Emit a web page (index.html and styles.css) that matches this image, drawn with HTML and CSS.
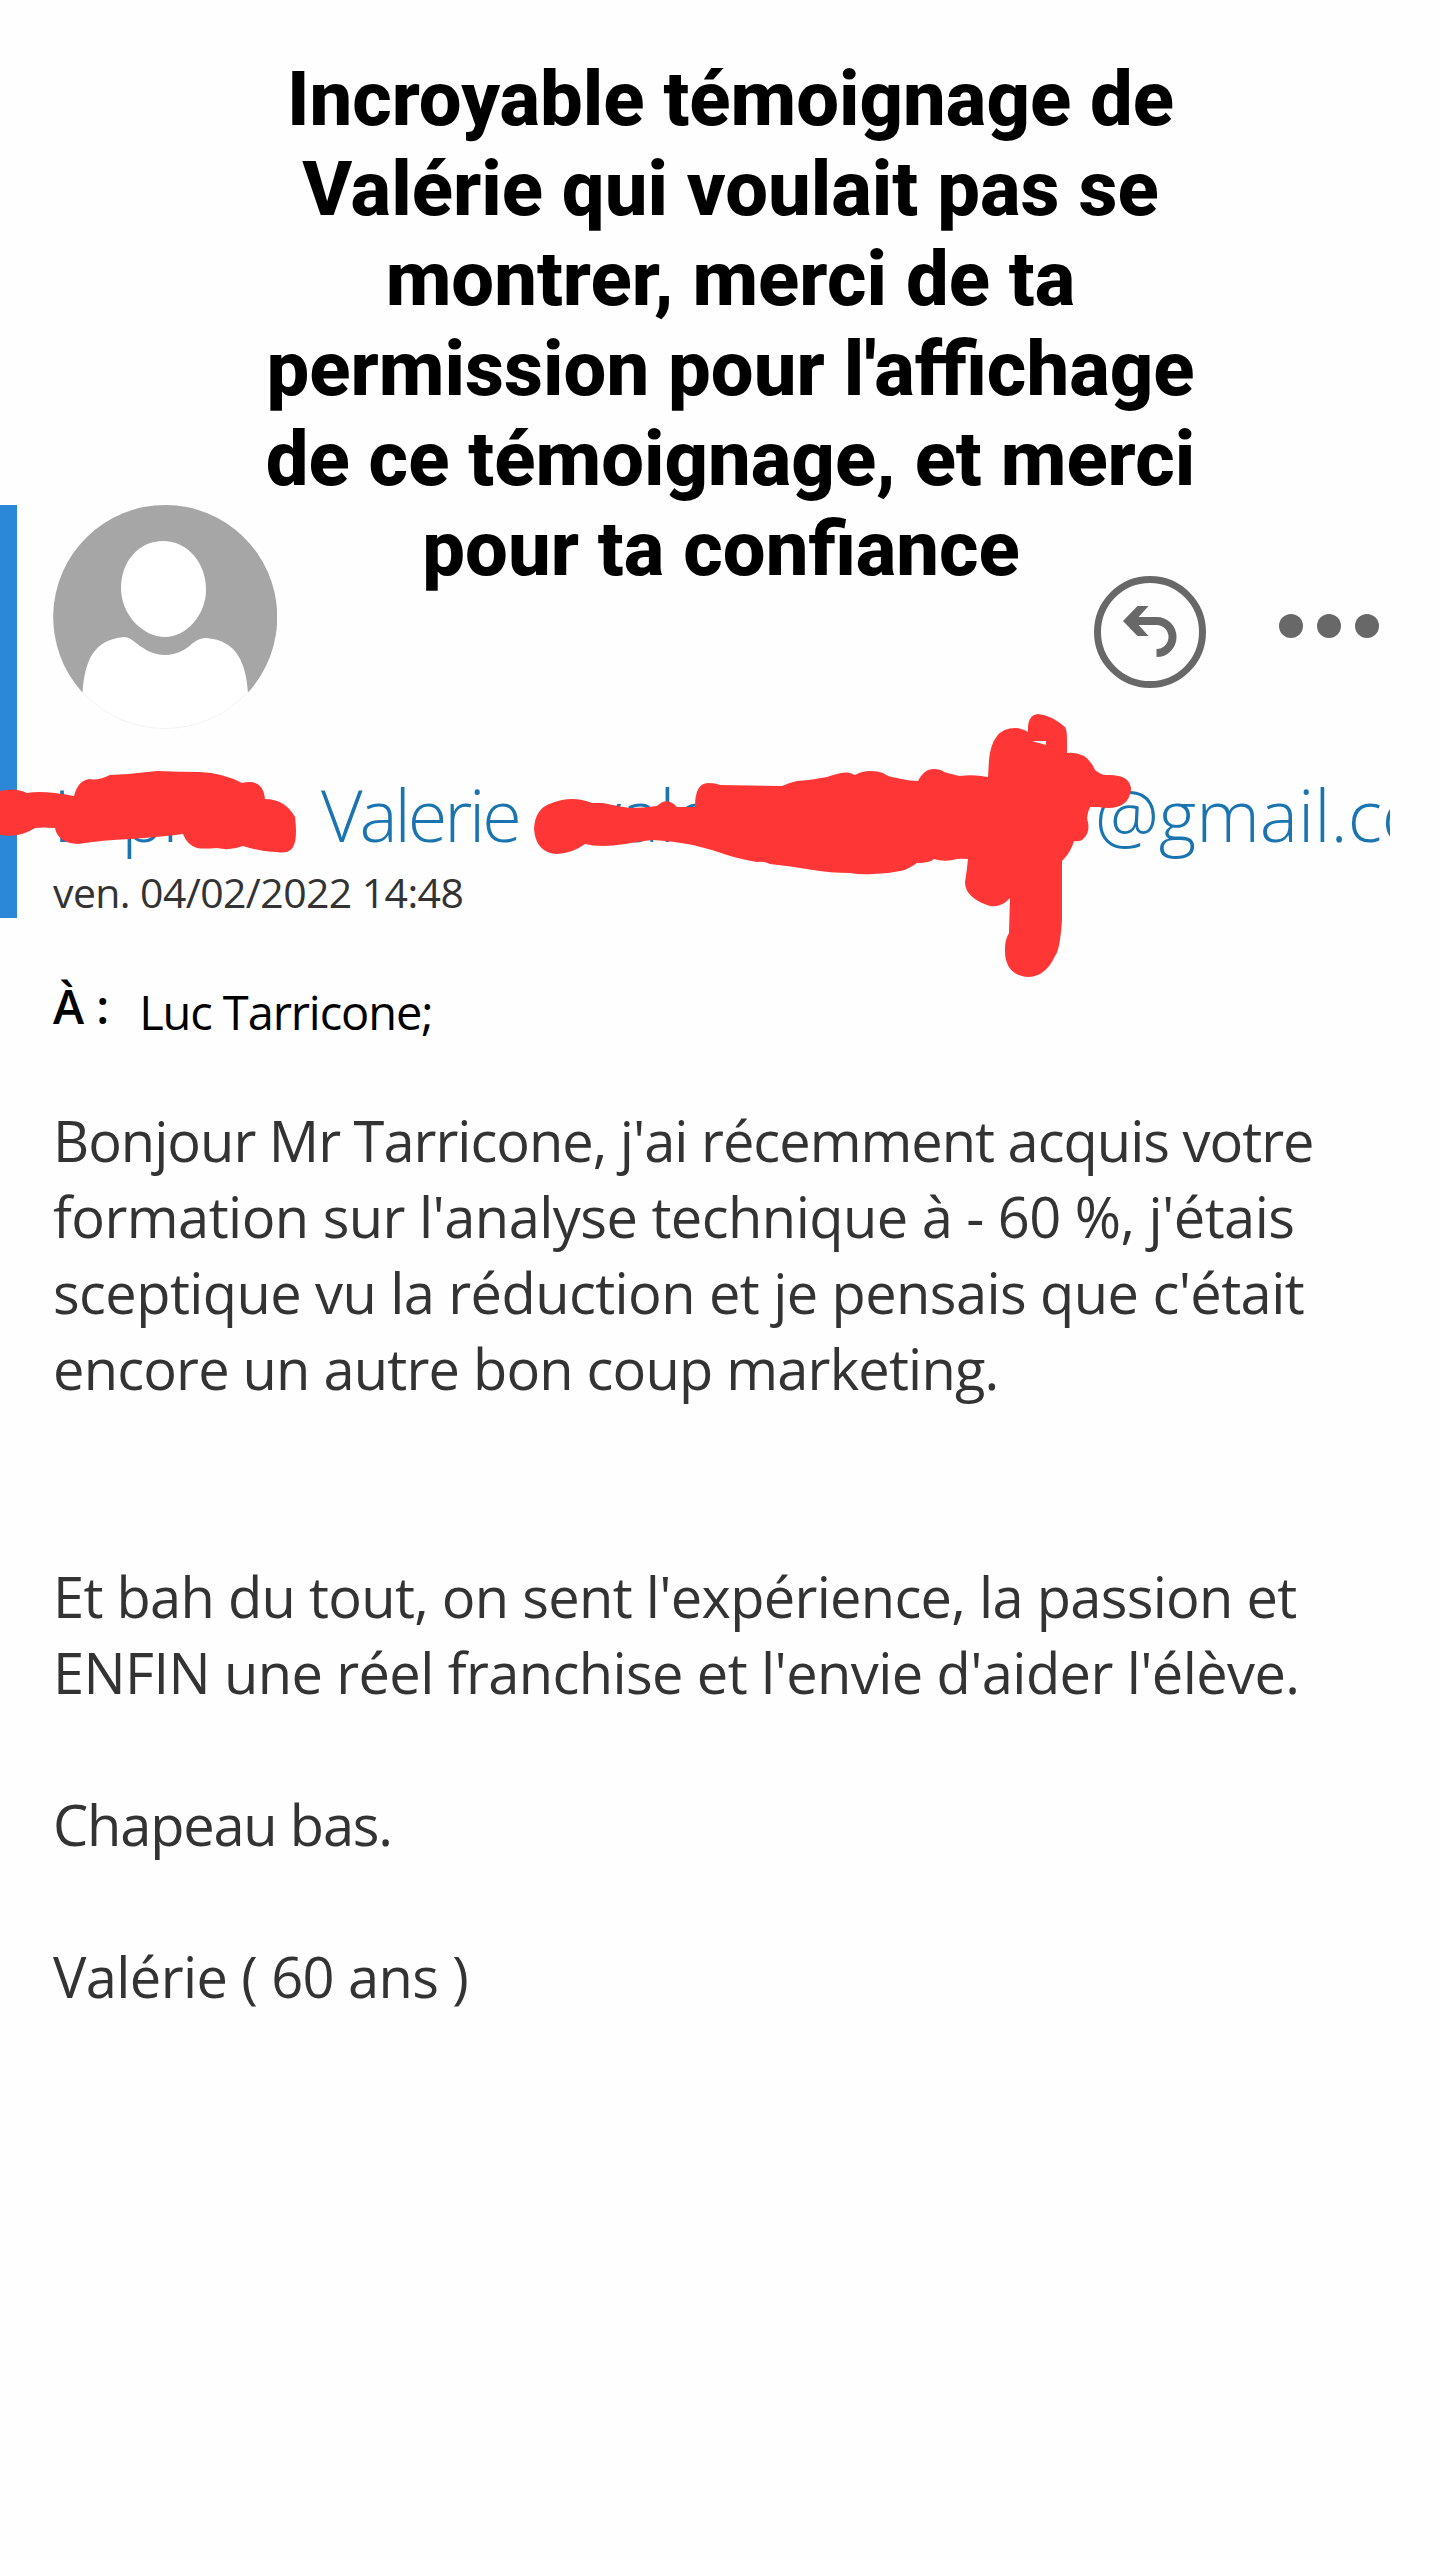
FILE: index.html
```html
<!DOCTYPE html>
<html lang="fr">
<head>
    <meta charset="UTF-8">
    <meta name="viewport" content="width=device-width, initial-scale=1.0">
    <title>Témoignage de Valérie</title>
    <link rel="stylesheet" href="styles.css">
</head>
<body>
    <div class="page">
        <h1 class="title">
            Incroyable témoignage de<br>
            Valérie qui voulait pas se<br>
            montrer, merci de ta<br>
            permission pour l'affichage<br>
            de ce témoignage, et merci<br>
            pour ta confiance&nbsp;
        </h1>

        <header class="mail-header">
            <div class="header-top">
                <!-- Avatar -->
                <svg class="avatar" viewBox="0 0 224 224">
                    <circle cx="112" cy="112" r="111.5" fill="#fff" stroke="#f3f3f3"/>
                    <path fill="#a6a6a6" d="M29.500 187.500A112 112 0 1 1 195 187.500C193 160 185 135 153 133C138 133 137 149 112 150C88 149 82 132 71 132C40 135 32 156 29.500 187.500Z"/>
                    <path fill="#fff" d="M110 36C134 36 153 57 153 85C153 110 133 132 112 132C90 132 68 110 68 83C68 56 86 36 110 36Z"/>
                </svg>
                <div class="actions">
                    <!-- Répondre -->
                    <svg class="reply" viewBox="0 0 112 112" fill="none" stroke="#686868">
                        <circle cx="56" cy="56" r="52.500" stroke-width="7"/>
                        <path d="M39 45H62.500A16 16 0 0 1 62.500 77" stroke-width="8"/>
                        <path fill="#686868" stroke="none" d="M29 45L43.500 30H54.500L41 45L54.500 60H43.500Z"/>
                    </svg>
                    <div class="dots"><span></span><span></span><span></span></div>
                </div>
            </div>

            <div class="sender">
                <span class="lastname"><i>L</i><i>p</i><i>r</i><i>e</i></span>
                <span class="firstname">Valerie</span>
                <span class="user">vale</span>
                <span class="domain">@gmail.com</span>
            </div>
            <div class="date">ven. 04/02/2022 14:48</div>

            <!-- Traits rouges qui cachent le nom et l'adresse -->
            <svg class="marker" viewBox="0 505 1440 480" fill="#ff3636">
                <path d="M0 791Q15 787 27 793Q43 790 74 796Q78 780 90 779Q97 781 110 775Q133 774 157 771Q180 772 200 772Q223 773 242 783Q263 778 265 799Q285 799 295 817Q297 833 295 842Q292 855 277 852Q263 852 243 846Q230 851 217 848Q203 849 197 848Q187 845 183 834Q160 837 130 839Q103 840 78 844Q58 843 55 828Q43 827 35 828Q20 838 0 835Z"/>
                <path fill-rule="evenodd" d="M534 829Q535 808 552 803Q572 795 592 803L603 803Q616 806 630 808Q644 808 657 806Q667 796 677 807L695 807Q695 783 708 783Q716 783 720 785L782 786Q788 783 797 781Q812 780 827 777Q844 771 850 773L855 775Q862 771 870 771Q878 771 883 773Q888 777 897 778Q909 781 918 781Q924 769 933 769Q941 769 944 772Q955 775 960 776Q973 774 988 777L989 760Q992 728 1015 728Q1021 728 1028 732Q1027 715 1038 714Q1051 715 1065 727Q1067 730 1067 740L1067 753Q1087 751 1095 770Q1101 775 1106 775Q1131 774 1131 790Q1128 812 1098 807L1090 807Q1088 811 1087 818Q1091 832 1084 838Q1081 842 1074 841Q1071 852 1062 861L1062 920Q1060 950 1055 956Q1046 976 1029 977Q1004 976 1005 948Q1005 940 1009 933L1010 898Q1001 908 990 906Q965 898 965 882Q967 870 968 859Q957 858 953 860Q942 862 934 859Q930 863 917 863Q907 870 900 871Q887 874 873 874Q861 875 850 873Q830 873 813 870Q790 866 770 864Q765 861 757 862Q740 859 727 855Q710 849 693 845Q672 841 653 840Q640 841 625 844Q600 848 585 844Q573 853 557 854Q536 853 534 829ZM1032 741L1046 741L1046 745Z"/>
            </svg>
        </header>

        <div class="recipient">
            <span class="to">À :</span>
            <span class="to-name">Luc Tarricone;</span>
        </div>

        <div class="message">
            <p><span class="l1">Bonjour Mr Tarricone, j'ai récemment acquis votre</span><br>
            <span class="l2">formation sur l'analyse technique à - 60 %, j'étais</span><br>
            <span class="l3">sceptique vu la réduction et je pensais que c'était</span><br>
            <span class="l4">encore un autre bon coup marketing.</span></p>
            <p class="gap"><span class="l5">Et bah du tout, on sent l'expérience, la passion et</span><br>
            <span class="l6">ENFIN une réel franchise et l'envie d'aider l'élève.</span></p>
            <p><span class="l7">Chapeau bas.</span></p>
            <p><span class="l8">Valérie ( 60 ans )</span></p>
        </div>
    </div>
</body>
</html>
```
FILE: styles.css
```css
body {
    margin: 0;
    background: #fefefe;
    font-family: "Open Sans", "Noto Sans", sans-serif;
    color: #333;
}
.page {
    width: 1440px;
    height: 2560px;
    overflow: hidden;
}
.title {
    margin: 0;
    padding: 54px 0 0 21px;
    height: 451px;
    font-family: Roboto, sans-serif;
    font-size: 76px;
    font-weight: 850;
    line-height: 90px;
    text-align: center;
    color: #000;
}

/* En-tête du mail */
.mail-header {
    position: relative;
    box-sizing: border-box;
    height: 413px;
    padding-left: 36px;
    border-left: 17px solid #2b88d8;
}
.header-top {
    display: flex;
    justify-content: space-between;
}
.avatar {
    width: 224px;
    height: 224px;
}
.actions {
    display: flex;
    align-items: flex-start;
    gap: 73px;
    padding: 71px 61px 0 0;
}
.reply {
    width: 112px;
    height: 112px;
}
.dots {
    display: flex;
    gap: 14px;
    margin-top: 38px;
}
.dots span {
    width: 24px;
    height: 24px;
    border-radius: 50%;
    background: #686868;
}
.sender {
    display: flex;
    width: 1337px;
    height: 100px;
    margin-top: 35px;
    overflow: hidden;
    font-size: 72px;
    font-weight: 320;
    line-height: 100px;
    white-space: nowrap;
    color: #1a74b0;
}
.sender span {
    flex-shrink: 0;
}
.lastname {
    display: flex;
    width: 268px;
}
.lastname i {
    width: 71px;
    font-style: normal;
}
.lastname i:nth-child(2) {
    width: 41px;
}
.lastname i:nth-child(3) {
    width: 94px;
}
.firstname {
    width: 267px;
    letter-spacing: -3.1px;
}
.user {
    width: 507px;
}
.date {
    font-size: 41px;
    line-height: 56px;
    letter-spacing: -0.6px;
}
.marker {
    position: absolute;
    top: 0;
    left: -17px;
    width: 1440px;
    height: 480px;
}

/* Destinataire */
.recipient {
    display: flex;
    gap: 30px;
    height: 184px;
    padding: 55px 0 0 53px;
    box-sizing: border-box;
    font-size: 47px;
    line-height: 66px;
    color: #000;
}
.to {
    font-weight: 600;
}
.to-name {
    padding-top: 6px;
    letter-spacing: -1.1px;
}

/* Texte du mail */
.message {
    padding-left: 53px;
    font-size: 56px;
    line-height: 76px;
    white-space: nowrap;
}
.message p {
    margin: 0 0 76px;
}
.message .gap {
    margin-top: 152px;
}

/* Ajustement de l'espacement ligne par ligne */
.l1 { letter-spacing: -1px; }
.l2 { letter-spacing: -0.54px; }
.l3 { letter-spacing: -0.58px; }
.l4 { letter-spacing: -0.8px; }
.l5 { letter-spacing: -0.7px; }
.l6 { letter-spacing: -0.6px; }
.l7 { letter-spacing: -1.2px; }
.l8 { letter-spacing: -0.6px; }
```
